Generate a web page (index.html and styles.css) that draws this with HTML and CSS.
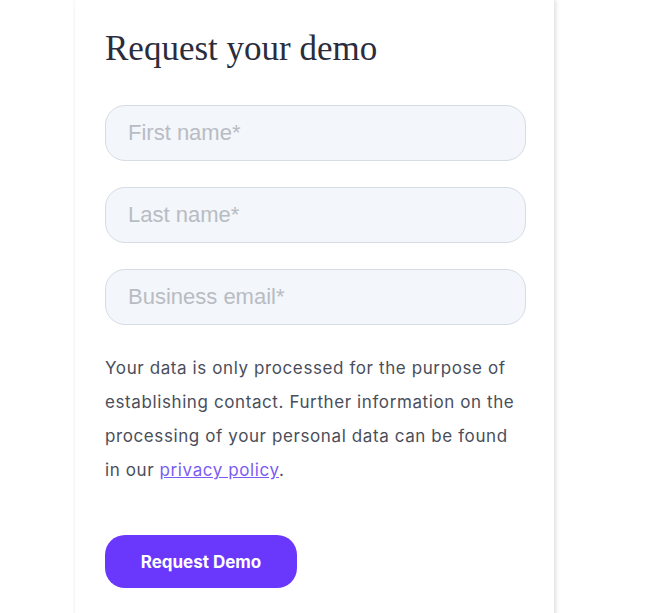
FILE: index.html
```html
<!DOCTYPE html>
<html lang="en">
<head>
    <meta charset="UTF-8">
    <meta name="viewport" content="width=device-width, initial-scale=1.0">
    <title>Request your demo</title>
    <link rel="stylesheet" href="styles.css">
</head>
<body>
    <div class="container">
        <h1>Request your demo</h1>

        <form class="demo-form">
            <input type="text" name="firstName" placeholder="First name*">
            <input type="text" name="lastName" placeholder="Last name*">
            <input type="email" name="email" placeholder="Business email*">

            <p class="note">
                Your data is only processed for the purpose of establishing contact. Further information on the processing of your personal data can be found in our <a href="#">privacy policy</a>.
            </p>

            <button type="button">Request Demo</button>
        </form>
    </div>
</body>
</html>
```

FILE: styles.css
```css
body {
    margin: 0;
    font-family: 'Inter', sans-serif;
    background-color: white;
    color: #333;
}

.container {
    width: 479px;
    margin-left: 75px;
    padding: 27px 28px 40px 30px;
    box-sizing: border-box;
    background-color: white;
    box-shadow: 2px 0 4px rgba(0, 0, 0, 0.12), -1px 0 3px rgba(0, 0, 0, 0.04);
}

h1 {
    margin: 0 0 34px;
    font-family: 'Liberation Serif', serif;
    font-size: 35px;
    font-weight: 400;
    line-height: 44px;
    color: #2b2d3d;
}

.demo-form {
    display: flex;
    flex-direction: column;
    gap: 26px;
}

.demo-form input {
    width: 100%;
    height: 56px;
    padding: 0 22px;
    border: 1px solid #d6dce5;
    border-radius: 20px;
    box-sizing: border-box;
    background-color: #f3f6fa;
    font-family: 'Liberation Sans', sans-serif;
    font-size: 22px;
    color: #333;
}

.demo-form input::placeholder {
    color: #b8bcc3;
}

.demo-form input:focus {
    outline: none;
    border-color: #7c5cf5;
}

.note {
    max-width: 416px;
    margin: 0;
    font-size: 17px;
    line-height: 34px;
    letter-spacing: 0.6px;
    color: #4a4e5b;
}

.note a {
    color: #7a5cf4;
}

button {
    align-self: flex-start;
    width: 192px;
    height: 53px;
    margin-top: 22px;
    border: none;
    border-radius: 20px;
    background-color: #6a38fc;
    color: white;
    font-family: 'Inter', sans-serif;
    font-size: 17px;
    font-weight: 700;
    cursor: pointer;
}
```
